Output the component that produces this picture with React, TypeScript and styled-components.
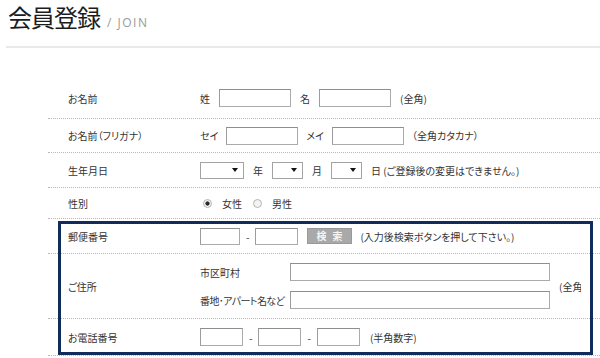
import React from "react";
import styled, { createGlobalStyle } from "styled-components";

const Global = createGlobalStyle`
  html, body { margin: 0; padding: 0; background: #fff; overflow: hidden; }
  body {
    font-family: "Noto Sans CJK JP", "Noto Sans", sans-serif;
    font-size: 10px;
    color: #333;
    font-feature-settings: "palt";
  }
  * { box-sizing: border-box; }
`;

const Header = styled.header`
  display: flex;
  align-items: baseline;
  height: 46px;
  padding-left: 8px;
`;

const Title = styled.h1`
  margin: 0;
  font-size: 24px;
  line-height: 34px;
  font-weight: 400;
  letter-spacing: -1px;
  color: #1c1c1c;
  font-feature-settings: normal;
`;

const Sub = styled.span`
  margin-left: 7px;
  font-family: "Open Sans", "Liberation Sans", sans-serif;
  font-size: 12px;
  letter-spacing: 1.5px;
  color: #999;
`;

const Rule = styled.div`
  margin-left: 6px;
  height: 2px;
  background: #e9e9e9;
`;

const Form = styled.div`
  margin: 30px 0 0 48px;
  width: 620px;
`;

const Row = styled.div<{ $h: number }>`
  display: grid;
  grid-template-columns: 132px auto;
  align-items: center;
  padding-left: 20px;
  height: ${(p) => p.$h}px;
  border-bottom: 1px dotted #b8b8b8;
`;

const Label = styled.div`
  color: #333;
  white-space: nowrap;
`;

const Field = styled.div<{ $gap?: number }>`
  display: flex;
  align-items: center;
  gap: ${(p) => p.$gap ?? 9}px;
  white-space: nowrap;
`;

const Text = styled.span<{ $ml?: number; $ls?: number }>`
  margin-left: ${(p) => p.$ml ?? 0}px;
  letter-spacing: ${(p) => p.$ls ?? 0}px;
`;

const Input = styled.input<{ $w: number; $h?: number }>`
  width: ${(p) => p.$w}px;
  height: ${(p) => p.$h ?? 18}px;
  margin: 0;
  padding: 0;
  background: #fff;
  border: 1px solid #ababab;
  border-top-color: #8e8e8e;
  border-left-color: #9c9c9c;
  border-radius: 0;
`;

const SelectWrap = styled.span<{ $w: number }>`
  position: relative;
  display: inline-block;
  width: ${(p) => p.$w}px;
  height: 17px;
  &::after {
    content: "";
    position: absolute;
    right: 6px;
    top: 6px;
    border-left: 3px solid transparent;
    border-right: 3px solid transparent;
    border-top: 4px solid #111;
    pointer-events: none;
  }
`;

const Select = styled.select`
  appearance: none;
  width: 100%;
  height: 100%;
  margin: 0;
  padding: 0;
  background: #fff;
  border: 1px solid #a3a3a3;
  border-radius: 0;
`;

const RadioGroup = styled.div`
  display: flex;
  align-items: center;
  gap: 11px;
  margin-left: 3px;
`;

const RadioLabel = styled.label`
  display: flex;
  align-items: center;
  gap: 10px;
`;

const Radio = styled.input`
  appearance: none;
  margin: 0;
  width: 9px;
  height: 9px;
  border-radius: 50%;
  border: 1px solid #b4b4b4;
  background: #f3f3f3;
  &:checked {
    background: radial-gradient(circle, #2a2a2a 0 1.8px, #f3f3f3 2.4px);
  }
`;

const Button = styled.button`
  margin: 0 0 0 3px;
  width: 45px;
  height: 16px;
  padding: 0 0 0 5px;
  background: #a9a9a9;
  border: 1px solid #999;
  border-radius: 0;
  color: #f4f4f4;
  font-family: inherit;
  font-size: 10px;
  font-weight: 700;
  letter-spacing: 6px;
  line-height: 14px;
`;

const Highlight = styled.div`
  position: relative;
  &::after {
    content: "";
    position: absolute;
    top: 2px;
    left: 10px;
    width: 529px;
    bottom: 1px;
    border: 3px solid #112b5b;
    background: linear-gradient(#fff, #fff) no-repeat right 0 top 0 / 0 0;
    pointer-events: none;
  }
`;

const AddressGrid = styled.div`
  display: grid;
  grid-template-columns: 90px 260px;
  row-gap: 10px;
  align-items: center;
`;

const AddressField = styled.div`
  display: flex;
  align-items: center;
  gap: 9px;
  white-space: nowrap;
`;

const Clip = styled.span`
  display: inline-block;
  width: 22px;
  overflow: hidden;
`;

export default function App() {
  return (
    <>
      <Global />
      <Header>
        <Title>会員登録</Title>
        <Sub>/ JOIN</Sub>
      </Header>
      <Rule />
      <Form>
        <Row $h={41}>
          <Label>お名前</Label>
          <Field>
            <Text>姓</Text>
            <Input $w={72} />
            <Text>名</Text>
            <Input $w={72} />
            <Text>(全角)</Text>
          </Field>
        </Row>
        <Row $h={34}>
          <Label>お名前（フリガナ）</Label>
          <Field $gap={8}>
            <Text>セイ</Text>
            <Input $w={72} />
            <Text>メイ</Text>
            <Input $w={72} />
            <Text>（全角カタカナ）</Text>
          </Field>
        </Row>
        <Row $h={35}>
          <Label>生年月日</Label>
          <Field>
            <SelectWrap $w={44}><Select /></SelectWrap>
            <Text>年</Text>
            <SelectWrap $w={31}><Select /></SelectWrap>
            <Text>月</Text>
            <SelectWrap $w={31}><Select /></SelectWrap>
            <Text>日 (ご登録後の変更はできません。)</Text>
          </Field>
        </Row>
        <Row $h={31}>
          <Label>性別</Label>
          <RadioGroup>
            <RadioLabel>
              <Radio type="radio" name="sex" defaultChecked />
              女性
            </RadioLabel>
            <RadioLabel>
              <Radio type="radio" name="sex" />
              男性
            </RadioLabel>
          </RadioGroup>
        </Row>
        <Highlight>
          <Row $h={35}>
            <Label>郵便番号</Label>
            <Field $gap={6}>
              <Input $w={40} $h={17} />
              <Text>-</Text>
              <Input $w={43} $h={17} />
              <Button type="button">検索</Button>
              <Text $ml={2}>(入力後検索ボタンを押して下さい。)</Text>
            </Field>
          </Row>
          <Row $h={65}>
            <Label>ご住所</Label>
            <AddressField>
              <AddressGrid>
                <Text>市区町村</Text>
                <Input $w={260} />
                <Text $ls={-0.6}>番地･アパート名など</Text>
                <Input $w={260} />
              </AddressGrid>
              <Clip>(全角)</Clip>
            </AddressField>
          </Row>
          <Row $h={37}>
            <Label>お電話番号</Label>
            <Field $gap={6}>
              <Input $w={43} />
              <Text>-</Text>
              <Input $w={43} />
              <Text>-</Text>
              <Input $w={43} />
              <Text $ml={4}>(半角数字)</Text>
            </Field>
          </Row>
        </Highlight>
      </Form>
    </>
  );
}
